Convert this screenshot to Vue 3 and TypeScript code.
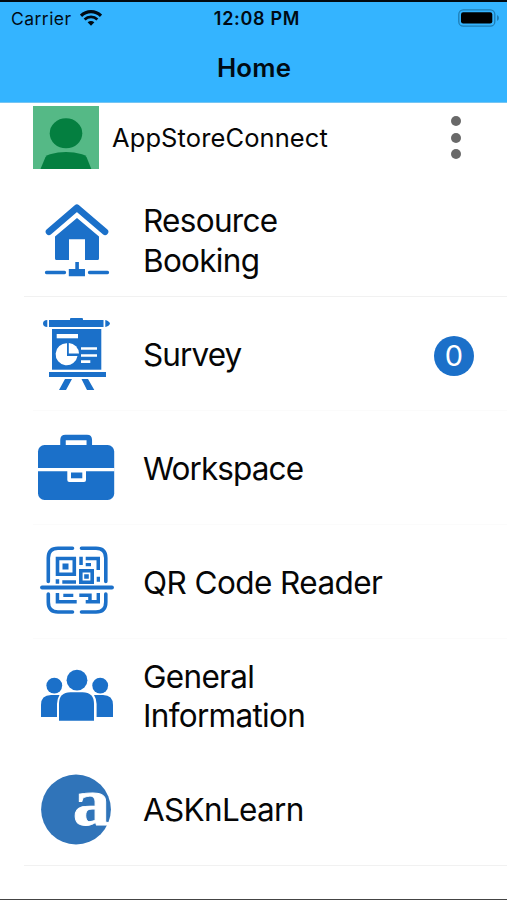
<script setup lang="ts">
interface MenuItem {
  id: string
  label: string
  spacing: string
  viewBox: string
  badge?: number
}

const items: MenuItem[] = [
  { id: 'booking', label: 'Resource Booking', spacing: '-0.7px', viewBox: '32 183 88 114' },
  { id: 'survey', label: 'Survey', spacing: '-0.9px', viewBox: '32 297 88 114', badge: 0 },
  { id: 'workspace', label: 'Workspace', spacing: '-0.9px', viewBox: '32 411 88 114' },
  { id: 'qr', label: 'QR Code Reader', spacing: '-0.57px', viewBox: '32 525 88 114' },
  { id: 'info', label: 'General Information', spacing: '-0.7px', viewBox: '32 639 88 113' },
  { id: 'learn', label: 'ASKnLearn', spacing: '-0.7px', viewBox: '32 752 88 114' },
]
</script>

<template>
  <div class="screen">
    <header class="top">
      <div class="status">
        <div class="carrier">
          <span class="carrier-name">Carrier</span>
          <svg class="wifi" viewBox="0 0 22 16" width="22" height="16">
            <path d="M1 5.800C6.500.2 15.500.2 21 5.800" fill="none" stroke="#000b14" stroke-width="3.200" />
            <path d="M4.600 9.500C8.300 6.100 13.700 6.100 17.400 9.500" fill="none" stroke="#000b14" stroke-width="2.800" />
            <path d="M7.600 12.300Q11 9.500 14.400 12.300L11 15.700Z" fill="#000b14" />
          </svg>
        </div>
        <div class="time">12:08 PM</div>
        <svg class="battery" viewBox="0 0 42 18" width="42" height="18">
          <rect x=".8" y=".8" width="36" height="16.400" rx="4.500" fill="none" stroke="#1f7db4" stroke-width="1.300" />
          <rect x="3" y="3.300" width="31.300" height="11.200" rx="2.200" fill="#000" />
          <path d="M39 6v6q2-1 2-3t-2-3z" fill="#1f7db4" />
        </svg>
      </div>
      <h1 class="title">Home</h1>
    </header>

    <section class="profile">
      <svg class="avatar" viewBox="33 106 66 63" width="66" height="63">
        <rect x="33" y="106" width="66" height="63" fill="#55b986" />
        <ellipse cx="66" cy="133.300" rx="16.300" ry="15" fill="#047f40" />
        <path d="M40.500 169L45.500 157Q47 155 50 154.200Q66 150 82 154.200Q85 155 86.500 157L91.300 169Z" fill="#047f40" />
      </svg>
      <span class="user">AppStoreConnect</span>
      <div class="dots"><i></i><i></i><i></i></div>
    </section>

    <ul class="menu">
      <li v-for="item in items" :key="item.id" class="row" :class="item.id">
        <svg class="icon" :viewBox="item.viewBox">
          <g v-if="item.id === 'booking'" fill="#1b70c9">
            <path d="M49 231.800L76.900 207.800L105 231.800" fill="none" stroke="#1b70c9" stroke-width="6.600" stroke-linecap="round" stroke-linejoin="round" />
            <path d="M55 236.500L77 218L99 236.500V258.500Q99 260 97.500 260H85V239.300H69V260H56.500Q55 260 55 258.500Z" />
            <path d="M75.300 262h3.600v7H85v7.200H68.800V269h6.500z" />
            <path d="M46.500 272.500H64.500M89.500 272.500H107.500" stroke="#1b70c9" stroke-width="3.300" stroke-linecap="round" />
          </g>
          <g v-else-if="item.id === 'survey'" fill="#1b70c9">
            <path d="M49 320H70V319q0-1 1-1H82q1 0 1 1V320H103.500V327H49ZM47.300 320V327C44.500 327 43 325.500 43 323.500S44.500 320 47.300 320ZM105.300 320V327C107.500 326.500 110 325 110 323.500S107.500 320.500 105.300 320ZM49 372H106V377H49ZM65 379H72L66 390H59ZM81.500 379H88L94.300 390H87Z" />
            <rect x="52" y="329" width="49.300" height="40.700" />
            <rect x="56.700" y="334" width="21.300" height="4.300" fill="#fff" />
            <path d="M67 343.300A11 11 0 1 0 77.500 356H67Z" fill="#fff" />
            <path d="M68.800 343A11 11 0 0 1 79 353.500H68.800Z" fill="#fff" />
            <path d="M81 348.500H97M81 355.500H97M81 361.700H90.300" stroke="#fff" stroke-width="2.700" />
          </g>
          <g v-else-if="item.id === 'workspace'">
            <path d="M63 448V440Q63 437.500 65.500 437.500H87Q89.300 437.500 89.300 440V448" fill="none" stroke="#1b70c9" stroke-width="5.500" />
            <rect x="38" y="445" width="76.200" height="55" rx="6.500" fill="#1b70c9" />
            <path d="M38 469.700H114.500" stroke="#fff" stroke-width="3.300" />
            <path d="M67.300 471H86V480Q86 482 84 482H69.300Q67.300 482 67.300 480Z" fill="#fff" />
            <path d="M71 472.500H82.300V478.300H71Z" fill="#1b70c9" />
          </g>
          <g v-else-if="item.id === 'qr'" fill="#1b70c9">
            <path d="M48.300 581.500V558Q48.300 548.300 58 548.300H72.500M81.500 548.300H96Q105.800 548.300 105.800 558V581.500M48.300 594V602Q48.300 612 58 612H72.500M81.500 612H96Q105.800 612 105.800 602V594" fill="none" stroke="#1b70c9" stroke-width="3.600" stroke-linecap="round" />
            <path d="M42 587.500H112" stroke="#1b70c9" stroke-width="3.800" stroke-linecap="round" />
            <path d="M57.500 558.500H74.300V574.300H57.500ZM80.800 570.800H92.200V582.200H80.800Z" fill="none" stroke="#1b70c9" stroke-width="3.600" />
            <path d="M62.500 563.500h6v6h-6zM84.200 574.200h4.600v4.600h-4.600zM79.300 556.700h3.500v8.300h-3.500zM85.700 556.700H100V570H96.500V560.200H85.700zM85.700 563h5.300v3.300h-5.300zM96.700 576.700h3.300v5h-3.300zM55.700 579.300h3.500v4.400h-3.500zM62.300 580.300H76v3.400H62.300zM55.700 593H59.200V600H76.700V603.500H55.700zM63.300 593.700h10v3.200h-10zM79.300 593.500H91.700V600H96.600V593H100V603.500H85.700V600H88.200V597H79.300z" />
          </g>
          <g v-else-if="item.id === 'info'" fill="#1b70c9">
            <circle cx="77" cy="680.200" r="10.400" />
            <circle cx="54.300" cy="685.600" r="7.900" />
            <circle cx="100.200" cy="685.600" r="7.900" />
            <path d="M59 720.700V704Q59 692.300 70.500 692.300H82.500Q94 692.300 94 704V720.700Z" />
            <path d="M41 717V705Q41 695 51 695H59.500Q57 699 57 704V717ZM113 717V705Q113 695 103 695H94Q96.600 699 96.600 704V717Z" />
          </g>
          <g v-else>
            <circle cx="76" cy="809.500" r="34.900" fill="#3074b9" />
            <text transform="translate(72.800 825.300) scale(1.120 1)" class="glyph">a</text>
          </g>
        </svg>
        <span class="label" :style="{ letterSpacing: item.spacing }">{{ item.label }}</span>
        <span v-if="item.badge !== undefined" class="badge">{{ item.badge }}</span>
      </li>
    </ul>
  </div>
</template>

<style>
body {
  margin: 0;
  background: #fff;
}
</style>

<style scoped>
.screen {
  box-sizing: border-box;
  width: 507px;
  height: 900px;
  display: flex;
  flex-direction: column;
  background: #fff;
  color: #060606;
  font-family: Inter, 'Liberation Sans', sans-serif;
  border-bottom: 1px solid #444;
  overflow: hidden;
}
.top {
  box-sizing: border-box;
  height: 103px;
  background: #34b4ff;
  border-top: 2px solid #02090f;
  border-bottom: 1px solid #75c5f3;
  color: #000b14;
}
.status {
  display: grid;
  grid-template-columns: 1fr auto 1fr;
  align-items: center;
  height: 32px;
  padding: 0 7px 0 11px;
}
.carrier {
  display: flex;
  align-items: center;
  gap: 8.5px;
}
.carrier-name {
  font-size: 17.5px;
  letter-spacing: 0.45px;
}
.time {
  font-size: 18px;
  font-weight: 600;
  letter-spacing: 0.7px;
  margin-left: 3px;
}
.battery {
  justify-self: end;
}
.title {
  margin: 16px 0 0 1px;
  text-align: center;
  font-size: 25.8px;
  line-height: 36px;
  font-weight: 600;
  letter-spacing: 0.2px;
}
.profile {
  box-sizing: border-box;
  height: 80px;
  display: flex;
  padding: 3px 46px 0 33px;
}
.user {
  margin-left: 13px;
  font-size: 25.5px;
  letter-spacing: 0.1px;
  line-height: 64px;
}
.dots {
  display: flex;
  flex-direction: column;
  gap: 6.5px;
  margin: 10px 0 0 auto;
}
.dots i {
  width: 10px;
  height: 10px;
  border-radius: 50%;
  background: #696969;
}
.menu {
  list-style: none;
  margin: 0;
  padding: 0;
}
.row {
  box-sizing: border-box;
  height: 114px;
  display: flex;
  align-items: center;
  padding: 0 33px 0 32px;
  background: linear-gradient(#fbfbfb, #fbfbfb) 33px 100% / 100% 1px no-repeat;
}
.row.info {
  height: 113px;
  background: none;
}
.row.booking,
.row.learn {
  background: linear-gradient(#f1f1f1, #f1f1f1) 24px 100% / 100% 1px no-repeat;
}
.icon {
  flex: none;
  width: 88px;
  height: 100%;
}
.glyph {
  font: bold 67px 'Liberation Serif', serif;
  fill: #fff;
  stroke: #fff;
  stroke-width: 0.8px;
}
.label {
  width: 250px;
  margin-left: 23px;
  padding-top: 1px;
  font-size: 31.5px;
  line-height: 39.5px;
}
.booking .label,
.info .label {
  width: 180px;
}
.badge {
  margin: 4px 0 0 auto;
  width: 40px;
  height: 40px;
  border-radius: 50%;
  background: #1b70c9;
  color: #fff;
  font-size: 29px;
  line-height: 40px;
  text-align: center;
}
</style>
